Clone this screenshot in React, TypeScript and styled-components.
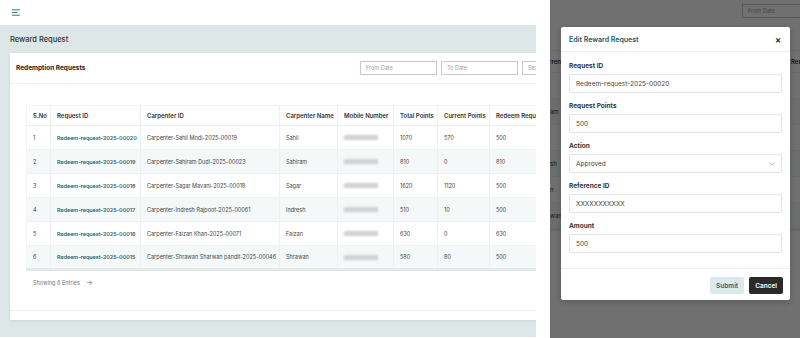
import styled, { createGlobalStyle } from "styled-components";

const GlobalStyle = createGlobalStyle`
  html, body { margin: 0; padding: 0; background: #fff; }
  body { font-family: Inter, "Noto Sans", sans-serif; color: #333; }
  * { box-sizing: border-box; }
`;

type Row = {
  id: string;
  carpenter: string;
  name: string;
  total: number;
  current: number;
  redeem: number;
  tail: string;
};

const rows: Row[] = [
  { id: "Redeem-request-2025-00020", carpenter: "Carpenter-Sahil Modi-2025-00019", name: "Sahil", total: 1070, current: 570, redeem: 500, tail: "" },
  { id: "Redeem-request-2025-00019", carpenter: "Carpenter-Sahiram Dudi-2025-00023", name: "Sahiram", total: 810, current: 0, redeem: 810, tail: "am" },
  { id: "Redeem-request-2025-00018", carpenter: "Carpenter-Sagar Mavani-2025-00018", name: "Sagar", total: 1620, current: 1120, redeem: 500, tail: "" },
  { id: "Redeem-request-2025-00017", carpenter: "Carpenter-Indresh Rajpoot-2025-00061", name: "Indresh", total: 510, current: 10, redeem: 500, tail: "sh" },
  { id: "Redeem-request-2025-00016", carpenter: "Carpenter-Faizan Khan-2025-00071", name: "Faizan", total: 630, current: 0, redeem: 630, tail: "n" },
  { id: "Redeem-request-2025-00015", carpenter: "Carpenter-Shrawan Sharwan pandit-2025-00046", name: "Shrawan", total: 580, current: 80, redeem: 500, tail: "wan" },
];

const columns = [
  { label: "S.No", width: 24 },
  { label: "Request ID", width: 90 },
  { label: "Carpenter ID", width: 139 },
  { label: "Carpenter Name", width: 58 },
  { label: "Mobile Number", width: 56 },
  { label: "Total Points", width: 44 },
  { label: "Current Points", width: 52 },
  { label: "Redeem Request", width: 70 },
];

const fields = [
  { label: "Request ID", value: "Redeem-request-2025-00020" },
  { label: "Request Points", value: "500" },
  { label: "Action", value: "Approved", select: true },
  { label: "Reference ID", value: "XXXXXXXXXXX" },
  { label: "Amount", value: "500" },
];

function Hamburger() {
  return (
    <svg width="8" height="7" viewBox="0 0 8 7" fill="none">
      <path d="M0.5 0.8H7.5M0.5 3.5H5M0.5 6.2H7.5" stroke="#3c7883" strokeWidth="1" strokeLinecap="round" />
    </svg>
  );
}

function Chevron() {
  return (
    <svg width="6" height="4" viewBox="0 0 6 4" fill="none">
      <path d="M0.5 0.7L3 3.2L5.5 0.7" stroke="#9aa3a8" strokeWidth="0.7" />
    </svg>
  );
}

export default function App() {
  return (
    <>
      <GlobalStyle />
      <Screen>
        <LeftPane>
          <TopBar>
            <Hamburger />
          </TopBar>
          <Main>
            <PageTitle>Reward Request</PageTitle>
            <Card>
              <CardHeader>
                <CardTitle>Redemption Requests</CardTitle>
                <Filters>
                  <DateInput>From Date</DateInput>
                  <DateInput>To Date</DateInput>
                  <DateInput>Search</DateInput>
                </Filters>
              </CardHeader>
              <CardBody>
                <Table>
                  <colgroup>
                    {columns.map((c) => (
                      <col key={c.label} style={{ width: c.width }} />
                    ))}
                  </colgroup>
                  <thead>
                    <tr>
                      {columns.map((c) => (
                        <Th key={c.label}>{c.label}</Th>
                      ))}
                    </tr>
                  </thead>
                  <tbody>
                    {rows.map((r, i) => (
                      <Tr key={r.id} $striped={i % 2 === 1}>
                        <Td>{i + 1}</Td>
                        <Td>
                          <IdLink>{r.id}</IdLink>
                        </Td>
                        <Td>{r.carpenter}</Td>
                        <Td>{r.name}</Td>
                        <Td>
                          <Masked />
                        </Td>
                        <Td>{r.total}</Td>
                        <Td>{r.current}</Td>
                        <Td>{r.redeem}</Td>
                      </Tr>
                    ))}
                  </tbody>
                </Table>
                <Entries>
                  Showing 6 Entries <Arrow>→</Arrow>
                </Entries>
              </CardBody>
              <CardFooter />
            </Card>
          </Main>
        </LeftPane>
        <Gutter />
        <RightPane>
          <BehindTop>
            <BehindInput>From Date</BehindInput>
          </BehindTop>
          <BehindTable>
            <BehindRow $head>
              <BehindTail>Current</BehindTail>
              <BehindGap />
              <BehindLast>Request</BehindLast>
            </BehindRow>
            {rows.map((r, i) => (
              <BehindRow key={r.id} $striped={i % 2 === 1}>
                <BehindTail>{r.tail}</BehindTail>
                <BehindGap />
                <BehindLast />
              </BehindRow>
            ))}
          </BehindTable>
          <Overlay />
          <Modal>
            <ModalHeader>
              <ModalTitle>Edit Reward Request</ModalTitle>
              <Close>×</Close>
            </ModalHeader>
            <ModalBody>
              {fields.map((f) => (
                <Field key={f.label}>
                  <Label>{f.label}</Label>
                  <InputBox>
                    {f.value}
                    {f.select && <Chevron />}
                  </InputBox>
                </Field>
              ))}
            </ModalBody>
            <ModalFooter>
              <Button $variant="light">Submit</Button>
              <Button $variant="dark">Cancel</Button>
            </ModalFooter>
          </Modal>
        </RightPane>
      </Screen>
    </>
  );
}

const Screen = styled.div`
  display: flex;
  width: 800px;
  height: 338px;
  overflow: hidden;
`;

const LeftPane = styled.div`
  width: 536px;
  flex: 0 0 536px;
  display: flex;
  flex-direction: column;
  overflow: hidden;
`;

const TopBar = styled.div`
  height: 25px;
  flex: 0 0 25px;
  display: flex;
  align-items: center;
  padding-left: 12px;
  background: #fff;
`;

const Main = styled.div`
  flex: 1;
  background: #dde7e8;
  padding: 0 0 0 10px;
  display: flex;
  flex-direction: column;
  border-bottom: 1px solid #fff;
`;

const PageTitle = styled.div`
  height: 28px;
  display: flex;
  align-items: center;
  font-size: 7.5px;
  font-weight: 500;
  color: #2f3436;
`;

const Card = styled.div`
  width: 599px;
  height: 267px;
  background: #fff;
  box-shadow: 0 1px 3px rgba(0, 0, 0, 0.08);
  display: flex;
  flex-direction: column;
`;

const CardHeader = styled.div`
  height: 31px;
  display: flex;
  align-items: center;
  padding: 0 10px 0 6px;
  border-bottom: 1px solid #eef1f2;
`;

const CardTitle = styled.div`
  font-size: 6.5px;
  font-weight: 700;
  color: #222;
`;

const Filters = styled.div`
  margin-left: auto;
  display: flex;
  gap: 4px;
`;

const DateInput = styled.div`
  width: 77px;
  height: 14px;
  border: 1px solid #c6cad6;
  padding: 0 5px;
  display: flex;
  align-items: center;
  font-size: 5.5px;
  color: #9ba1a6;
`;

const CardBody = styled.div`
  padding: 21px 0 0 16px;
`;

const Table = styled.table`
  border-collapse: collapse;
  table-layout: fixed;
  width: 533px;
  border-bottom: 3px solid #e3e8ea;
`;

const Th = styled.th`
  height: 20px;
  padding: 0 6px;
  text-align: left;
  font-size: 6px;
  font-weight: 600;
  color: #333;
  white-space: nowrap;
  overflow: hidden;
  border-right: 1px solid #eef0f1;
  border-top: 1px solid #f1f3f4;
  &:first-child { border-left: 1px solid #f1f3f4; }
`;

const Tr = styled.tr<{ $striped?: boolean }>`
  background: ${(p) => (p.$striped ? "#f5f8f9" : "#fff")};
`;

const Td = styled.td`
  height: 24px;
  padding: 0 6px;
  font-size: 5.5px;
  color: #444;
  white-space: nowrap;
  overflow: hidden;
  border-top: 1px solid #eef0f1;
  border-right: 1px solid #eef0f1;
  &:first-child { border-left: 1px solid #f1f3f4; }
`;

const IdLink = styled.span`
  color: #28606d;
  font-weight: 600;
  font-size: 5.4px;
`;

const Masked = styled.div`
  width: 34px;
  height: 5px;
  background: #cfd1d3;
  filter: blur(1.2px);
`;

const Entries = styled.div`
  padding: 7px 0 0 7px;
  font-size: 5.5px;
  color: #777;
  display: flex;
  align-items: center;
  gap: 6px;
`;

const Arrow = styled.span`
  font-size: 7px;
  color: #666;
`;

const CardFooter = styled.div`
  margin-top: auto;
  height: 10px;
  border-top: 1px solid #f0f2f3;
`;

const Gutter = styled.div`
  flex: 0 0 14px;
  background: #fff;
`;

const RightPane = styled.div`
  flex: 1;
  position: relative;
  overflow: hidden;
  background: #fff;
`;

const BehindTop = styled.div`
  height: 50px;
  padding: 4px 0 0 192px;
`;

const BehindInput = styled.div`
  width: 77px;
  height: 14px;
  border: 1px solid #c6cad6;
  padding: 0 5px;
  display: flex;
  align-items: center;
  font-size: 5.5px;
  color: #9ba1a6;
`;

const BehindTable = styled.div`
  display: flex;
  flex-direction: column;
  border-bottom: 3px solid #e3e8ea;
`;

const BehindRow = styled.div<{ $head?: boolean; $striped?: boolean }>`
  display: flex;
  align-items: center;
  height: ${(p) => (p.$head ? "22px" : "26px")};
  border-top: 1px solid #eef0f1;
  background: ${(p) => (p.$striped ? "#f5f8f9" : "#fff")};
  font-size: 6px;
  font-weight: ${(p) => (p.$head ? 600 : 400)};
  color: #333;
`;

const BehindTail = styled.div`
  width: 13px;
  overflow: hidden;
  white-space: nowrap;
  direction: rtl;
  text-align: left;
`;

const BehindGap = styled.div`
  flex: 1;
  align-self: stretch;
  border-left: 1px solid #eef0f1;
`;

const BehindLast = styled.div`
  width: 10px;
  white-space: nowrap;
  overflow: hidden;
  padding-left: 1px;
`;

const Overlay = styled.div`
  position: absolute;
  inset: 0;
  background: rgba(0, 0, 0, 0.56);
`;

const Modal = styled.div`
  position: absolute;
  left: 11px;
  top: 27px;
  width: 229px;
  background: #fff;
  border-radius: 2px;
  box-shadow: 0 2px 6px rgba(0, 0, 0, 0.2);
`;

const ModalHeader = styled.div`
  height: 25px;
  display: flex;
  align-items: center;
  justify-content: space-between;
  padding: 0 9px 0 8px;
  border-bottom: 1px solid #eceff0;
`;

const ModalTitle = styled.div`
  font-size: 7px;
  font-weight: 600;
  color: #1e5664;
`;

const Close = styled.div`
  font-size: 9px;
  font-weight: 700;
  color: #333;
  line-height: 1;
`;

const ModalBody = styled.div`
  padding: 10px 8px 6px;
`;

const Field = styled.div`
  margin-bottom: 9px;
`;

const Label = styled.div`
  font-size: 6.5px;
  line-height: 8px;
  font-weight: 700;
  color: #333;
  margin-bottom: 4px;
`;

const InputBox = styled.div`
  height: 19px;
  border: 1px solid #e3e6e8;
  border-radius: 2px;
  padding: 0 6px;
  display: flex;
  align-items: center;
  justify-content: space-between;
  font-size: 6.5px;
  color: #444;
`;

const ModalFooter = styled.div`
  border-top: 1px solid #eceff0;
  padding: 8px 7px 6px;
  display: flex;
  justify-content: flex-end;
  gap: 5px;
`;

const Button = styled.div<{ $variant: "light" | "dark" }>`
  height: 17px;
  padding: 0 6px;
  display: flex;
  align-items: center;
  border-radius: 2px;
  font-size: 6.5px;
  font-weight: 600;
  background: ${(p) => (p.$variant === "dark" ? "#2a2a2a" : "#dce8eb")};
  color: ${(p) => (p.$variant === "dark" ? "#fff" : "#2b6472")};
`;
